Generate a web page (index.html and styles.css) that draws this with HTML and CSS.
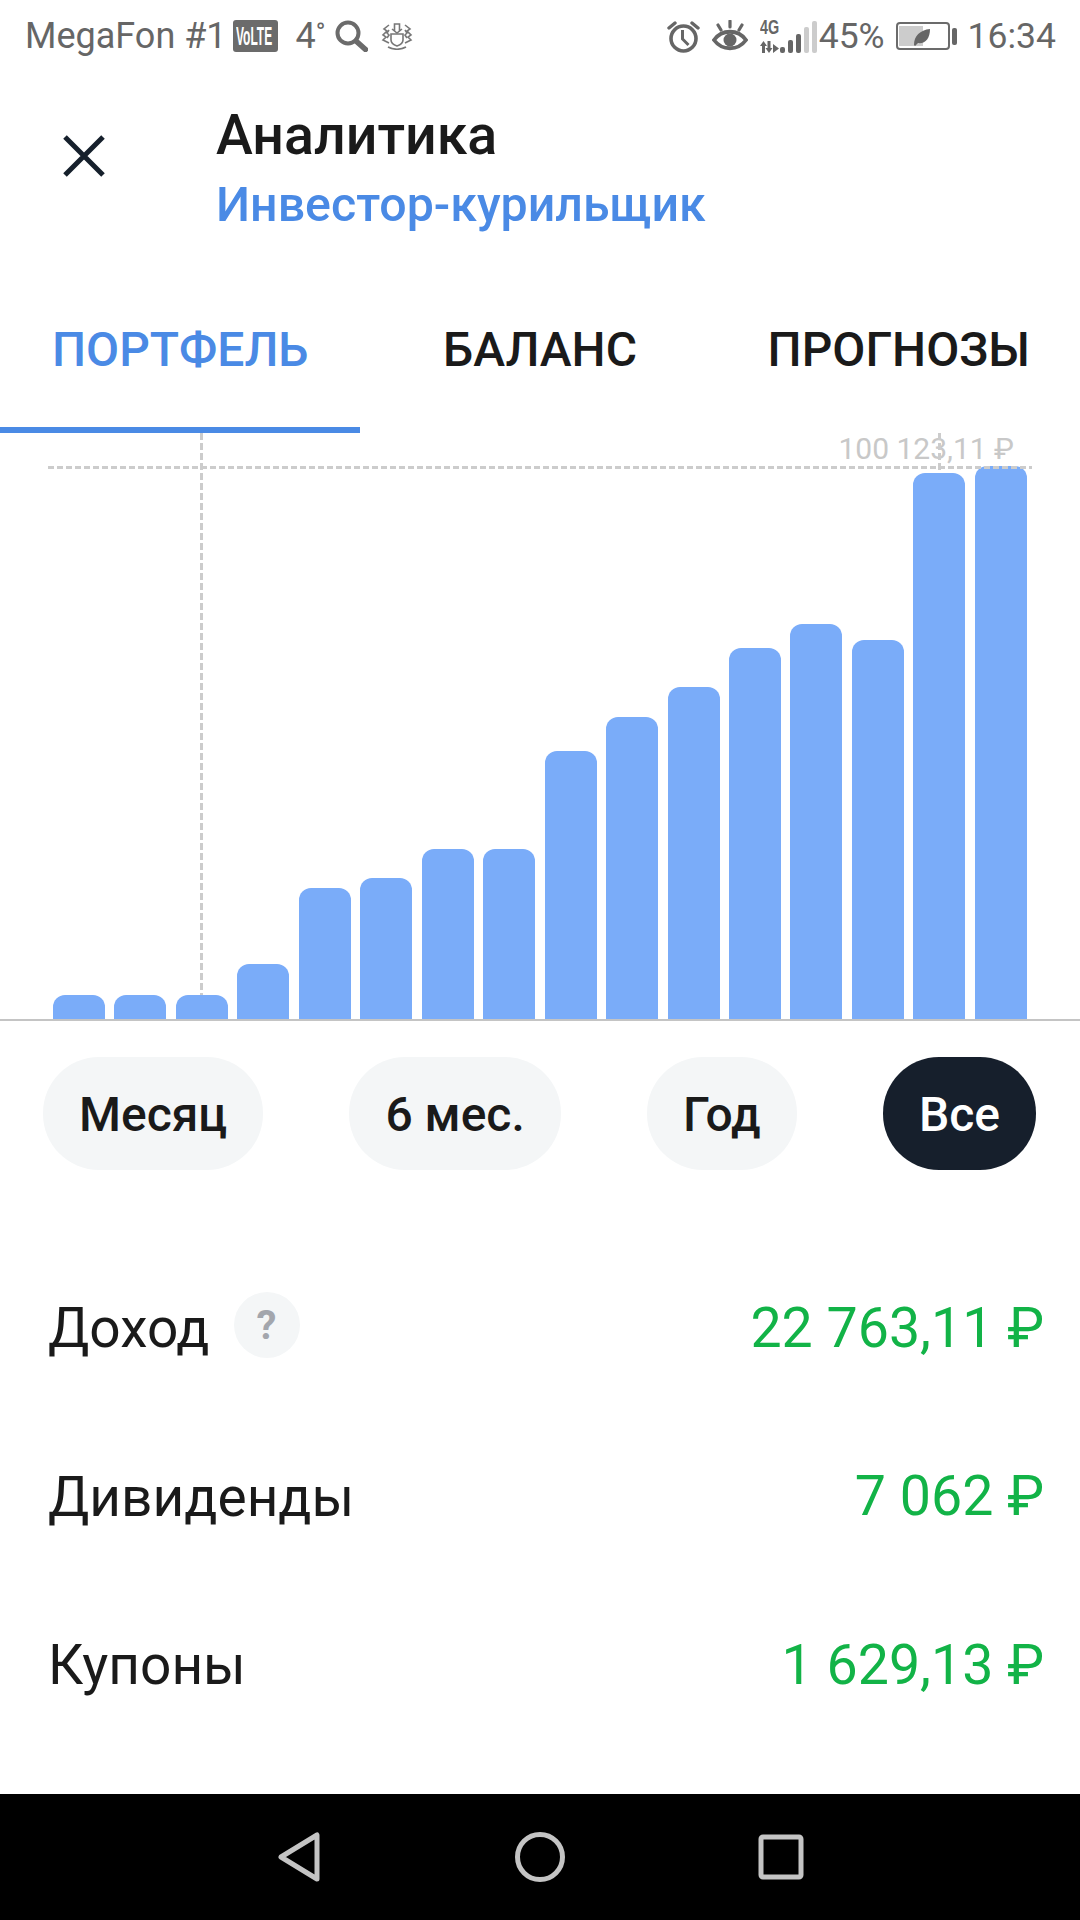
FILE: index.html
```html
<!DOCTYPE html>
<html lang="ru">
<head>
<meta charset="utf-8">
<title>Аналитика</title>
<link rel="stylesheet" href="styles.css">
</head>
<body>
<div class="screen">
  <div class="statusbar">
    <div class="status-left">
      <span class="carrier">MegaFon #1</span>
      <svg class="i-volte" viewBox="0 0 45 32"><rect width="45" height="32" rx="3" fill="#6b6b6b"/><svg x="3" y="6" width="39" height="20" viewBox="0 0 52 12" preserveAspectRatio="none"><text x="0" y="11.500" class="volte-text">VoLTE</text></svg></svg>
      <span class="temp">4<span class="deg">°</span></span>
      <svg class="i-search" viewBox="0 0 33 32"><circle cx="13" cy="13" r="10.5" fill="none" stroke="#6b6b6b" stroke-width="4"/><path d="M21 21 30.5 29.5" stroke="#6b6b6b" stroke-width="5.500" stroke-linecap="round"/></svg>
      <svg class="i-crest" viewBox="0 0 32 28" fill="none" stroke="#777" stroke-width="1.6"><path d="M10 12h12v6c0 3-3 5-6 6-3-1-6-3-6-6z"/><path d="M13.500 9V2h5v7M11 7l5 4 5-4"/><path d="M8 3 3 7l3 2-4 4 3 2-3 3 6 3M8 8l-2 3 2 2-2 3M24 3l5 4-3 2 4 4-3 2 3 3-6 3M24 8l2 3-2 2 2 3"/><path d="M7 25c5 3 13 3 18 0"/></svg>
    </div>
    <div class="status-right">
      <svg class="i-alarm" viewBox="0 0 33 33" fill="none" stroke="#666"><circle cx="16.500" cy="18.500" r="12.500" stroke-width="3.600"/><path d="M15.500 10v9l6 6" stroke-width="3"/><path d="M2 8l6-5M31 8l-6-5" stroke-width="3.400" stroke-linecap="round"/></svg>
      <svg class="i-eye" viewBox="0 0 36 32" fill="none" stroke="#666"><path d="M2 20c8-11 24-11 32 0-8 11-24 11-32 0z" stroke-width="3.800"/><circle cx="18" cy="20" r="6.500" fill="#666" stroke="none"/><path d="M18 1v6M6 5l3 5M30 5l-3 5" stroke-width="3.200" stroke-linecap="round"/></svg>
      <div class="signal">
        <div class="net">
          <span class="net-4g">4G</span>
          <svg class="i-arrows" viewBox="0 0 19 12" fill="#666"><path d="M3.500 0 0 5h2v7h3V5h2zM7.500 0h3v7h2L9 12 5.500 7h2zM13 3l6 4.500L13 12z"/></svg>
        </div>
        <div class="bars-signal">
          <i class="sig sig-a"></i><i class="sig sig-b"></i><i class="sig sig-c"></i><i class="sig sig-d off"></i><i class="sig sig-e off"></i>
        </div>
      </div>
      <span class="pct">45%</span>
      <svg class="i-battery" viewBox="0 0 61 28"><rect x="1" y="1" width="52" height="26" rx="3" fill="none" stroke="#6b6b6b" stroke-width="2"/><rect x="3" y="4" width="24" height="20" fill="#ccc"/><path d="M18 23c0-9 6-15 16-16 0 10-5 15-12 14l-3 3z" fill="#666"/><rect x="56" y="6" width="5" height="17" rx="2" fill="#666"/></svg>
      <span class="clock">16:34</span>
    </div>
  </div>

  <header class="header">
    <button class="close" aria-label="Закрыть">
      <svg viewBox="0 0 44 44"><path d="M3 3 41 41M41 3 3 41" stroke="#16202c" stroke-width="5"/></svg>
    </button>
    <div class="titles">
      <div class="title">Аналитика</div>
      <div class="subtitle">Инвестор-курильщик</div>
    </div>
  </header>

  <nav class="tabs">
    <div class="tab active"><span>ПОРТФЕЛЬ</span></div>
    <div class="tab"><span>БАЛАНС</span></div>
    <div class="tab"><span>ПРОГНОЗЫ</span></div>
  </nav>

  <section class="chart">
    <div class="max-label">100 123,11 ₽</div>
    <div class="guide-h"></div>
    <div class="guide-v guide-v1"></div>
    <div class="guide-v guide-v2"></div>
    <div class="bars">
      <div class="bar" style="height:24px"></div>
      <div class="bar" style="height:24px"></div>
      <div class="bar" style="height:24px"></div>
      <div class="bar" style="height:55px"></div>
      <div class="bar" style="height:131px"></div>
      <div class="bar" style="height:141px"></div>
      <div class="bar" style="height:170px"></div>
      <div class="bar" style="height:170px"></div>
      <div class="bar" style="height:268px"></div>
      <div class="bar" style="height:302px"></div>
      <div class="bar" style="height:332px"></div>
      <div class="bar" style="height:371px"></div>
      <div class="bar" style="height:395px"></div>
      <div class="bar" style="height:379px"></div>
      <div class="bar" style="height:546px"></div>
      <div class="bar" style="height:553px"></div>
    </div>
  </section>

  <div class="periods">
    <div class="pill">Месяц</div>
    <div class="pill">6 мес.</div>
    <div class="pill">Год</div>
    <div class="pill selected">Все</div>
  </div>

  <section class="stats">
    <div class="row">
      <div class="row-label">Доход <span class="help">?</span></div>
      <div class="row-value">22 763,11 ₽</div>
    </div>
    <div class="row">
      <div class="row-label">Дивиденды</div>
      <div class="row-value">7 062 ₽</div>
    </div>
    <div class="row">
      <div class="row-label">Купоны</div>
      <div class="row-value">1 629,13 ₽</div>
    </div>
  </section>

  <div class="navbar">
    <svg class="nav-back" viewBox="0 0 44 50"><path d="M40 3v44L4 25z" fill="none" stroke="#c4c4c4" stroke-width="5" stroke-linejoin="round"/></svg>
    <svg class="nav-home" viewBox="0 0 50 50"><circle cx="25" cy="25" r="22.500" fill="none" stroke="#c4c4c4" stroke-width="5"/></svg>
    <svg class="nav-recent" viewBox="0 0 46 46"><rect x="3" y="3" width="40" height="40" rx="2" fill="none" stroke="#c4c4c4" stroke-width="5"/></svg>
  </div>
</div>
</body>
</html>
```

FILE: styles.css
```css
* { box-sizing: border-box; }
html, body { margin: 0; padding: 0; background: #fff; }
body { font-family: Roboto, "Noto Sans", sans-serif; color: #1a1a1a; }
.screen { width: 1080px; height: 1920px; display: flex; flex-direction: column; overflow: hidden; background: #fff; }

.statusbar { height: 72px; padding: 0 24px 0 25px; display: flex; align-items: center; justify-content: space-between; color: #666; font-size: 36px; }
.status-left, .status-right { display: flex; align-items: center; }
.carrier { margin-right: 6px; }
.i-volte { width: 45px; height: 32px; margin-right: 18px; }
.volte-text { font-family: "Liberation Sans", sans-serif; font-weight: 700; font-size: 16px; fill: #fff; }
.temp { width: 39px; display: flex; align-items: flex-start; }
.deg { font-size: 26px; line-height: 34px; }
.i-search { width: 33px; height: 32px; margin-right: 13px; }
.i-crest { width: 32px; height: 28px; }
.i-alarm { width: 33px; height: 33px; margin-right: 12px; }
.i-eye { width: 36px; height: 32px; margin-right: 12px; }
.signal { display: flex; align-items: flex-end; width: 55px; height: 34px; margin-right: 4px; }
.net { width: 20px; height: 34px; flex: none; display: flex; flex-direction: column; justify-content: space-between; }
.net-4g { display: block; width: 20px; height: 16px; font-family: "Liberation Sans", sans-serif; font-weight: 700; font-size: 20px; line-height: 16px; transform: scaleX(0.72); transform-origin: left center; }
.i-arrows { width: 19px; height: 12px; }
.bars-signal { display: flex; align-items: flex-end; gap: 3px; }
.sig { display: block; width: 5px; background: #666; border-radius: 2px; }
.sig.off { background: #ccc; }
.sig-a { height: 6px; } .sig-b { height: 13px; } .sig-c { height: 19px; } .sig-d { height: 26px; } .sig-e { height: 32px; }
.pct { margin-right: 11px; font-size: 35.500px; }
.clock { font-size: 35.500px; }
.i-battery { width: 61px; height: 28px; margin-right: 11px; }

.header { height: 168px; display: flex; padding-left: 62px; align-items: flex-start; }
.close { width: 44px; height: 44px; padding: 0; margin-top: 62px; margin-right: 110px; border: 0; background: none; }
.close svg { display: block; width: 44px; height: 44px; }
.titles { padding-top: 33px; }
.title { font-size: 55.500px; line-height: 62px; font-weight: 500; }
.subtitle { font-size: 48.300px; line-height: 54px; font-weight: 500; color: #4a8ae5; margin-top: 11px; }

.tabs { height: 193px; display: grid; grid-template-columns: 360px 1fr auto; }
.tab { font-size: 48px; font-weight: 500; line-height: 54px; padding-top: 83px; }
.tab:nth-child(1) { padding-left: 52px; color: #4a8ae5; border-bottom: 6px solid #4a8ae5; }
.tab:nth-child(2) { padding-left: 83px; }
.tab:nth-child(3) { padding-right: 50px; }

.chart { position: relative; height: 588px; border-bottom: 2px solid #c4c4c4; display: flex; align-items: flex-end; padding: 0 53px; }
.bars { width: 100%; display: flex; align-items: flex-end; justify-content: space-between; }
.bar { width: 52px; background: #7aacf9; border-radius: 12px 12px 0 0; }
.max-label { position: absolute; right: 66px; top: -1px; font-size: 30px; line-height: 34px; color: #c8c8c8; }
.guide-h { position: absolute; left: 48px; right: 48px; top: 33px; height: 3px; background: repeating-linear-gradient(90deg, #ccc 0 6px, transparent 6px 9px); }
.guide-v { position: absolute; width: 3px; background: repeating-linear-gradient(180deg, #ccc 0 7px, transparent 7px 10px); }
.guide-v1 { left: 200px; top: 0; height: 562px; }
.guide-v2 { left: 938px; top: 0; height: 40px; }

.periods { display: flex; justify-content: space-between; padding: 36px 44px 0 43px; }
.pill { height: 113px; padding: 2px 36px 0; border-radius: 56px; background: #f4f6f7; font-size: 48px; font-weight: 500; display: flex; align-items: center; }
.pill.selected { background: #161f2c; color: #fff; }

.stats { padding: 74px 36px 0 48px; }
.row { height: 168.500px; display: flex; align-items: center; justify-content: space-between; }
.row-label { font-size: 55px; display: flex; align-items: center; }
.row-value { font-size: 55.500px; color: #12b347; }
.help { width: 66px; height: 66px; border-radius: 50%; background: #f4f6f7; color: #a3a6ad; font-size: 40px; font-weight: 700; display: flex; align-items: center; justify-content: center; margin-left: 24px; position: relative; top: -3px; }

.navbar { margin-top: auto; height: 126px; background: #000; display: flex; align-items: center; padding-left: 277px; }
.nav-back { width: 44px; height: 50px; margin-right: 194px; }
.nav-home { width: 50px; height: 50px; margin-right: 193px; }
.nav-recent { width: 46px; height: 46px; }
```
